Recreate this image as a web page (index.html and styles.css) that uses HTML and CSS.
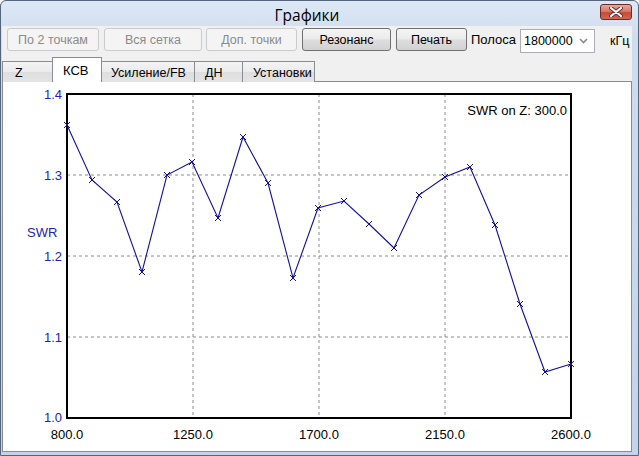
FILE: index.html
```html
<!DOCTYPE html>
<html lang="ru">
<head>
<meta charset="utf-8">
<title>Графики</title>
<link rel="stylesheet" href="styles.css">
</head>
<body>
<div class="window">
  <div class="titlebar">
    <span class="title">Графики</span>
    <div class="close">
      <svg width="14" height="10" viewBox="0 0 14 10"><path d="M2 1 L12 9 M12 1 L2 9" stroke="#6b2a2a" stroke-width="4" stroke-linecap="round"/><path d="M2 1 L12 9 M12 1 L2 9" stroke="#ffffff" stroke-width="2.2" stroke-linecap="round"/></svg>
    </div>
  </div>
  <div class="client">
    <div class="toolbar">
      <div class="btn disabled w1">По 2 точкам</div>
      <div class="btn disabled w2">Вся сетка</div>
      <div class="btn disabled w3">Доп. точки</div>
      <div class="btn w4">Резонанс</div>
      <div class="btn w5">Печать</div>
      <span class="label">Полоса</span>
      <div class="select"><span>1800000</span><svg width="9" height="6" viewBox="0 0 9 6"><polyline points="1,1 4.5,4.5 8,1" fill="none" stroke="#8a8a8a" stroke-width="1.6"/></svg></div>
      <span class="unit">кГц</span>
    </div>
    <div class="tabs">
      <div class="tab t1">Z</div>
      <div class="tab t2 active">КСВ</div>
      <div class="tab t3">Усиление/FB</div>
      <div class="tab t4">ДН</div>
      <div class="tab t5">Установки</div>
    </div>
    <div class="panel">
      <svg class="chart" width="628" height="368" viewBox="3 83 628 368">
        <g class="grid">
          <line x1="193" y1="95" x2="193" y2="419"/>
          <line x1="319" y1="95" x2="319" y2="419"/>
          <line x1="445" y1="95" x2="445" y2="419"/>
          <line x1="67" y1="176" x2="571" y2="176"/>
          <line x1="67" y1="257" x2="571" y2="257"/>
          <line x1="67" y1="338" x2="571" y2="338"/>
        </g>
        <rect class="axes" x="67" y="95" width="504" height="324"/>
        <polyline class="curve" points="67,126 92,181 117,203 142,273 167,176 192,163 218,219 243,138 268,184 293,279 318,209 344,202 369,225 394,249 419,196 445,178 470,168 495,226 520,305 545,373 571,365"/>
        <g class="marks">
          <path d="M64 123l6 6M70 123l-6 6 M89 178l6 6M95 178l-6 6 M114 200l6 6M120 200l-6 6 M139 270l6 6M145 270l-6 6 M164 173l6 6M170 173l-6 6 M189 160l6 6M195 160l-6 6 M215 216l6 6M221 216l-6 6 M240 135l6 6M246 135l-6 6 M265 181l6 6M271 181l-6 6 M290 276l6 6M296 276l-6 6 M315 206l6 6M321 206l-6 6 M341 199l6 6M347 199l-6 6 M366 222l6 6M372 222l-6 6 M391 246l6 6M397 246l-6 6 M416 193l6 6M422 193l-6 6 M442 175l6 6M448 175l-6 6 M467 165l6 6M473 165l-6 6 M492 223l6 6M498 223l-6 6 M517 302l6 6M523 302l-6 6 M542 370l6 6M548 370l-6 6 M568 362l6 6M574 362l-6 6"/>
        </g>
        <g class="ylab">
          <text x="62" y="100">1.4</text>
          <text x="62" y="181">1.3</text>
          <text x="62" y="262">1.2</text>
          <text x="62" y="343">1.1</text>
          <text x="62" y="423">1.0</text>
        </g>
        <text class="swr" x="27" y="238">SWR</text>
        <g class="xlab">
          <text x="67" y="440">800.0</text>
          <text x="193" y="440">1250.0</text>
          <text x="319" y="440">1700.0</text>
          <text x="445" y="440">2150.0</text>
          <text x="571" y="440">2600.0</text>
        </g>
        <text class="info" x="567" y="116">SWR on Z: 300.0</text>
      </svg>
    </div>
  </div>
</div>
</body>
</html>
```

FILE: styles.css
```css
html, body {
  margin: 0;
  padding: 0;
  background: #ffffff;
}

.window {
  width: 639px;
  height: 456px;
  box-sizing: border-box;
  border: 1px solid #55667c;
  border-radius: 6px 6px 0 0;
  background: linear-gradient(180deg, #dde8f6 0px, #cfdcee 40px, #c2d3ea 100%);
  padding: 0 6px 3px 1px;
  display: flex;
  flex-direction: column;
  font-family: "Liberation Sans", Arial, sans-serif;
}

.titlebar {
  height: 25px;
  flex: none;
  position: relative;
  display: flex;
  align-items: center;
  justify-content: center;
}

.title {
  font-family: "Open Sans", "Noto Sans", sans-serif;
  font-size: 15.5px;
  color: #000000;
  margin-left: -20px;
  margin-top: 3px;
}

.close {
  position: absolute;
  right: 0;
  top: 3px;
  width: 32px;
  height: 16px;
  box-sizing: border-box;
  border: 1px solid #6a2a2a;
  border-radius: 3px;
  background: linear-gradient(180deg, #e8a89c 0%, #d67a6a 45%, #c44a38 55%, #d06a52 100%);
  display: flex;
  align-items: center;
  justify-content: center;
}

.client {
  flex: 1;
  background: #f0f0f0;
  display: flex;
  flex-direction: column;
}

.toolbar {
  height: 32px;
  flex: none;
  box-sizing: border-box;
  padding: 2px 0 0 5px;
  display: flex;
  align-items: flex-start;
  font-size: 12.5px;
}

.btn {
  height: 23px;
  box-sizing: border-box;
  border: 1px solid #707070;
  border-radius: 3px;
  background: linear-gradient(180deg, #f4f4f4 0%, #ebebeb 48%, #dddddd 52%, #d2d2d2 100%);
  display: flex;
  align-items: center;
  justify-content: center;
  color: #000000;
  margin-right: 5px;
}

.btn.disabled {
  border-color: #c9cbcd;
  background: #f4f4f4;
  color: #8b8b8b;
}

.w1 { width: 92px; }
.w2 { width: 98px; margin-right: 4px; }
.w3 { width: 91px; }
.w4 { width: 89px; }
.w5 { width: 71px; margin-right: 4px; }

.label {
  height: 23px;
  line-height: 23px;
  margin-right: 4px;
  font-size: 13px;
}

.select {
  width: 75px;
  height: 24px;
  margin-top: 1px;
  box-sizing: border-box;
  border: 1px solid #abadb3;
  background: #ffffff;
  display: flex;
  align-items: center;
  justify-content: space-between;
  padding: 0 6px 0 3px;
  font-size: 12.5px;
}

.unit {
  height: 23px;
  line-height: 27px;
  margin-left: 15px;
}

.tabs {
  height: 24px;
  flex: none;
  display: flex;
  align-items: flex-end;
  font-size: 12.5px;
  position: relative;
  z-index: 1;
  margin-bottom: -1px;
}

.tab {
  height: 21px;
  box-sizing: border-box;
  border: 1px solid #898c95;
  border-bottom: none;
  border-right: none;
  background: linear-gradient(180deg, #f3f3f3 0%, #ebebeb 50%, #dedede 51%, #e4e4e4 100%);
  padding: 4px 0 0 10px;
  color: #000000;
}

.tab.t5 { border-right: 1px solid #898c95; }
.t1 { width: 50px; padding-left: 12px; }
.t2 { width: 50px; }
.t3 { width: 92px; padding-left: 9px; }
.t4 { width: 48px; }
.t5 { width: 73px; }

.tab.active {
  height: 25px;
  background: #ffffff;
  border-right: 1px solid #898c95;
  padding: 5px 0 0 10px;
  font-size: 13px;
}

.tab.active + .tab { border-left: none; }

.panel {
  flex: 1;
  background: #ffffff;
  border: 1px solid #898c95;
  box-sizing: border-box;
}

.chart {
  display: block;
  font-family: "Liberation Sans", Arial, sans-serif;
  font-size: 13px;
}

.grid line {
  stroke: #8c8c8c;
  stroke-width: 1;
  stroke-dasharray: 3 3;
}

.axes {
  fill: none;
  stroke: #000000;
  stroke-width: 2;
}

.curve {
  fill: none;
  stroke: #1010a0;
  stroke-width: 1.1;
}

.marks path {
  stroke: #1010a0;
  stroke-width: 1;
  fill: none;
}

.ylab text {
  fill: #2222bb;
  text-anchor: end;
}

.swr { fill: #2222bb; }

.xlab text {
  fill: #000000;
  text-anchor: middle;
}

.info {
  fill: #000000;
  text-anchor: end;
}
```
